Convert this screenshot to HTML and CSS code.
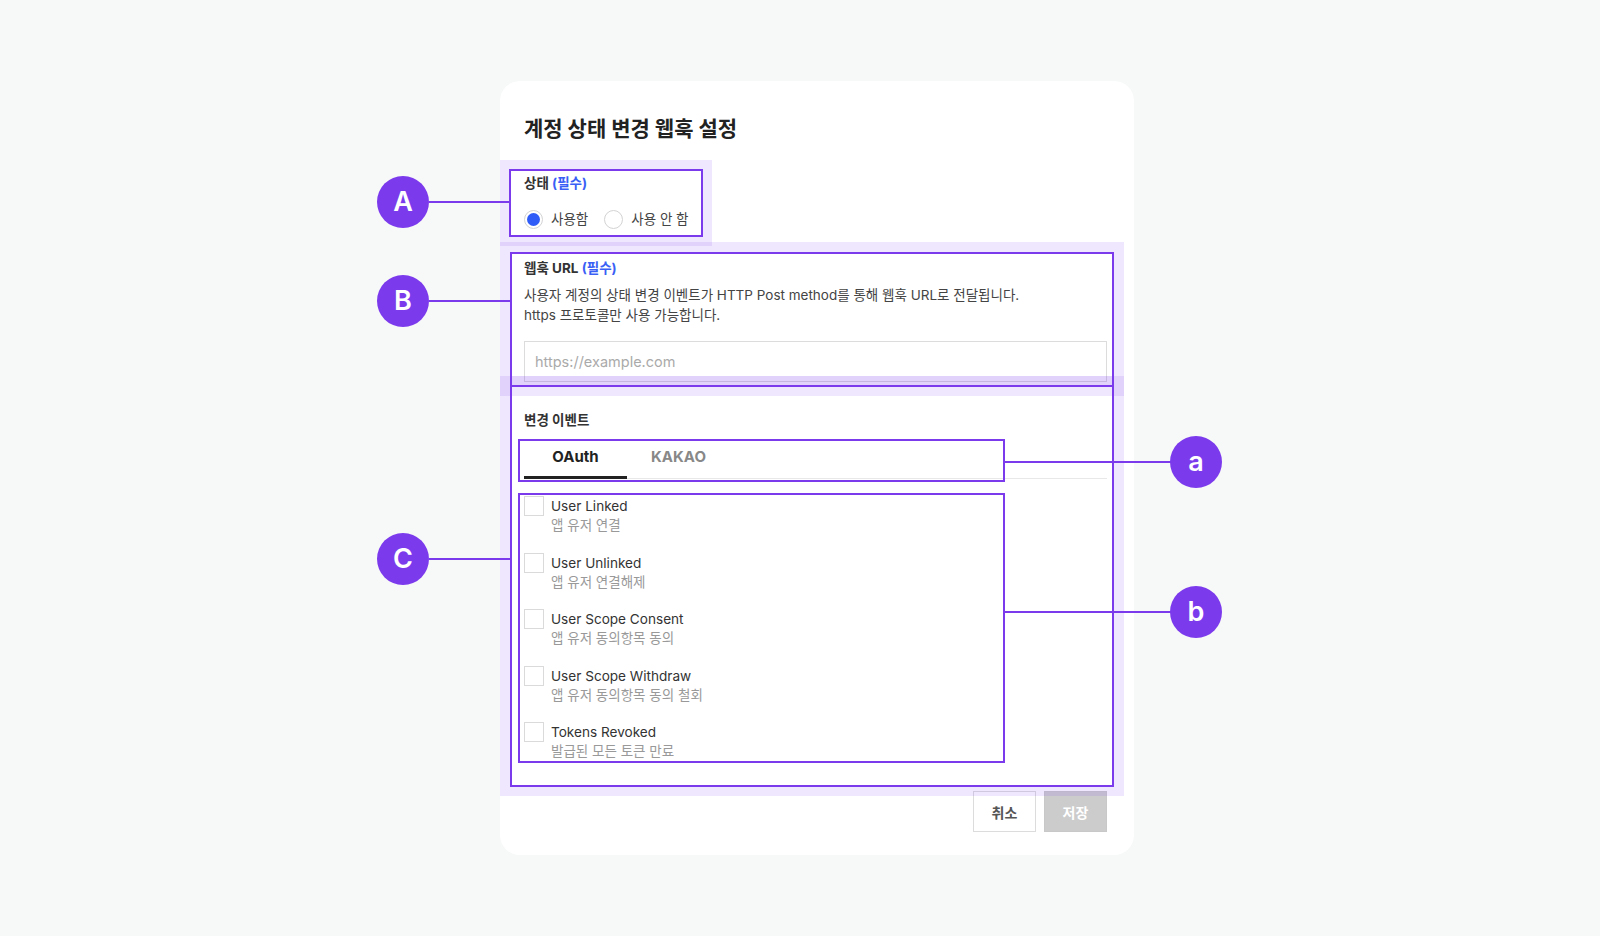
FILE: index.html
```html
<!DOCTYPE html>
<html lang="ko">
<head>
    <meta charset="UTF-8">
    <meta name="viewport" content="width=device-width, initial-scale=1.0">
    <title>계정 상태 변경 웹훅 설정</title>
    <link rel="stylesheet" href="styles.css">
</head>
<body>
    <div class="stage">
        <div class="card">
            <h2 class="title">계정 상태 변경 웹훅 설정</h2>

            <div class="field field-status">
                <div class="label">상태 <span class="req">(필수)</span></div>
                <div class="radios">
                    <label class="radio-item"><span class="radio on"></span>사용함</label>
                    <label class="radio-item"><span class="radio"></span>사용 안 함</label>
                </div>
            </div>

            <div class="field field-url">
                <div class="label">웹훅 URL <span class="req">(필수)</span></div>
                <p class="desc">사용자 계정의 상태 변경 이벤트가 HTTP Post method를 통해 웹훅 URL로 전달됩니다.<br>https 프로토콜만 사용 가능합니다.</p>
                <input type="text" class="url-input" placeholder="https://example.com">
            </div>

            <div class="field field-events">
                <div class="label">변경 이벤트</div>
                <div class="tabs">
                    <div class="tab active">OAuth</div>
                    <div class="tab">KAKAO</div>
                </div>
                <ul class="event-list">
                    <li class="event">
                        <span class="check"></span>
                        <div>
                            <div class="event-name">User Linked</div>
                            <div class="event-desc">앱 유저 연결</div>
                        </div>
                    </li>
                    <li class="event">
                        <span class="check"></span>
                        <div>
                            <div class="event-name">User Unlinked</div>
                            <div class="event-desc">앱 유저 연결해제</div>
                        </div>
                    </li>
                    <li class="event">
                        <span class="check"></span>
                        <div>
                            <div class="event-name">User Scope Consent</div>
                            <div class="event-desc">앱 유저 동의항목 동의</div>
                        </div>
                    </li>
                    <li class="event">
                        <span class="check"></span>
                        <div>
                            <div class="event-name">User Scope Withdraw</div>
                            <div class="event-desc">앱 유저 동의항목 동의 철회</div>
                        </div>
                    </li>
                    <li class="event">
                        <span class="check"></span>
                        <div>
                            <div class="event-name">Tokens Revoked</div>
                            <div class="event-desc">발급된 모든 토큰 만료</div>
                        </div>
                    </li>
                </ul>
            </div>

            <div class="actions">
                <button class="btn">취소</button>
                <button class="btn btn-save">저장</button>
            </div>
        </div>

        <!-- guide marks drawn over the form -->
        <div class="band band-a"></div>
        <div class="band band-b"></div>
        <div class="band band-c"></div>
        <div class="band-strip"></div>

        <div class="mark-box box-a"></div>
        <div class="mark-box box-b"></div>
        <div class="mark-box box-c"></div>
        <div class="mark-box box-tabs"></div>
        <div class="mark-box box-list"></div>

        <div class="mark-line line-a"></div>
        <div class="mark-line line-b"></div>
        <div class="mark-line line-c"></div>
        <div class="mark-line line-tabs"></div>
        <div class="mark-line line-list"></div>

        <div class="badge badge-a">A</div>
        <div class="badge badge-b">B</div>
        <div class="badge badge-c">C</div>
        <div class="badge badge-tabs">a</div>
        <div class="badge badge-list">b</div>
    </div>
</body>
</html>
```

FILE: styles.css
```css
body {
    margin: 0;
    background: #f7f8f8;
    font-family: "Inter", "Noto Sans CJK KR", sans-serif;
    color: #333;
}

.stage {
    position: relative;
    width: 1600px;
    height: 936px;
    padding-top: 81px;
    box-sizing: border-box;
}

.card {
    margin-left: 500px;
    width: 634px;
    box-sizing: border-box;
    padding: 34px 27px 23px 24px;
    background: #fff;
    border-radius: 20px;
}

.title {
    margin: 0;
    font-size: 21px;
    line-height: 28px;
    font-weight: 700;
    color: #222;
}

.label {
    font-size: 13.5px;
    line-height: 20px;
    font-weight: 700;
    color: #333;
}

.req {
    color: #3a5ff5;
}

.field-status {
    margin-top: 30px;
}

.radios {
    display: flex;
    margin-top: 17px;
    font-size: 13.5px;
    line-height: 19px;
    color: #444;
}

.radio-item {
    display: flex;
    align-items: center;
    gap: 8px;
    margin-right: 16px;
}

.radio {
    width: 19px;
    height: 19px;
    box-sizing: border-box;
    border: 1px solid #d3d3d3;
    border-radius: 50%;
    display: flex;
    align-items: center;
    justify-content: center;
}

.radio.on::after {
    content: "";
    width: 13px;
    height: 13px;
    border-radius: 50%;
    background: #2f5cf6;
}

.field-url {
    margin-top: 29px;
}

.desc {
    margin: 7px 0 0;
    font-size: 13.5px;
    line-height: 20px;
    color: #444;
}

.url-input {
    display: block;
    width: 100%;
    height: 41px;
    margin-top: 16px;
    box-sizing: border-box;
    border: 1px solid #dcdcdc;
    padding: 0 10px;
    font-family: inherit;
    font-size: 14.5px;
    color: #333;
    outline: none;
}

.url-input::placeholder {
    color: #aaa;
}

.field-events {
    margin-top: 28px;
}

.tabs {
    display: flex;
    margin-top: 6px;
    border-bottom: 1px solid #e8e8e8;
}

.tab {
    width: 103px;
    padding: 11px 0 9px;
    text-align: center;
    font-size: 15px;
    line-height: 20px;
    font-weight: 700;
    color: #888;
    border-bottom: 3px solid transparent;
    margin-bottom: -1px;
}

.tab.active {
    color: #222;
    border-bottom-color: #222;
}

.event-list {
    list-style: none;
    margin: 17px 0 0;
    padding: 0;
}

.event {
    display: flex;
    gap: 7px;
    margin-bottom: 17.5px;
}

.event:last-child {
    margin-bottom: 0;
}

.check {
    width: 20px;
    height: 20px;
    box-sizing: border-box;
    border: 1px solid #dadada;
    flex-shrink: 0;
}

.event-name {
    font-size: 13.6px;
    line-height: 20px;
    color: #333;
}

.event-desc {
    font-size: 13.5px;
    line-height: 19px;
    color: #999;
}

.actions {
    display: flex;
    justify-content: flex-end;
    gap: 8px;
    margin-top: 30px;
}

.btn {
    width: 63px;
    height: 41px;
    border: 1px solid #dcdcdc;
    background: #fff;
    font-family: inherit;
    font-size: 14px;
    font-weight: 700;
    color: #555;
}

.btn-save {
    background: #cccccc;
    border-color: #c8c8c8;
    color: #fff;
}

/* guide marks */
.band,
.band-strip,
.mark-box,
.mark-line,
.badge {
    position: absolute;
    box-sizing: border-box;
}

.band {
    border: 10px solid rgba(124, 58, 237, 0.12);
}

.band-a { left: 500px; top: 160px; width: 212px; height: 86px; border-width: 9px; }
.band-b { left: 500px; top: 242px; width: 624px; height: 154px; }
.band-c { left: 500px; top: 376px; width: 624px; height: 420px; }

.band-strip {
    left: 510px;
    top: 376px;
    width: 604px;
    height: 10px;
    background: rgba(124, 58, 237, 0.12);
}

.mark-box {
    border: 2px solid #7c3aed;
}

.box-a { left: 509px; top: 169px; width: 194px; height: 68px; }
.box-b { left: 510px; top: 252px; width: 604px; height: 135px; }
.box-c { left: 510px; top: 385px; width: 604px; height: 402px; }
.box-tabs { left: 518px; top: 439px; width: 487px; height: 43px; }
.box-list { left: 518px; top: 493px; width: 487px; height: 270px; }

.mark-line {
    height: 2px;
    background: #7c3aed;
}

.line-a { left: 429px; top: 201px; width: 80px; }
.line-b { left: 429px; top: 300px; width: 81px; }
.line-c { left: 429px; top: 558px; width: 81px; }
.line-tabs { left: 1005px; top: 461px; width: 166px; }
.line-list { left: 1005px; top: 611px; width: 166px; }

.badge {
    width: 52px;
    height: 52px;
    border-radius: 50%;
    background: #7c3aed;
    color: #fff;
    font-family: "Inter", sans-serif;
    font-size: 27px;
    font-weight: 600;
    line-height: 52px;
    text-align: center;
}

.badge-a { left: 377px; top: 176px; }
.badge-b { left: 377px; top: 275px; }
.badge-c { left: 377px; top: 533px; }
.badge-tabs { left: 1170px; top: 436px; }
.badge-list { left: 1170px; top: 586px; }
```
